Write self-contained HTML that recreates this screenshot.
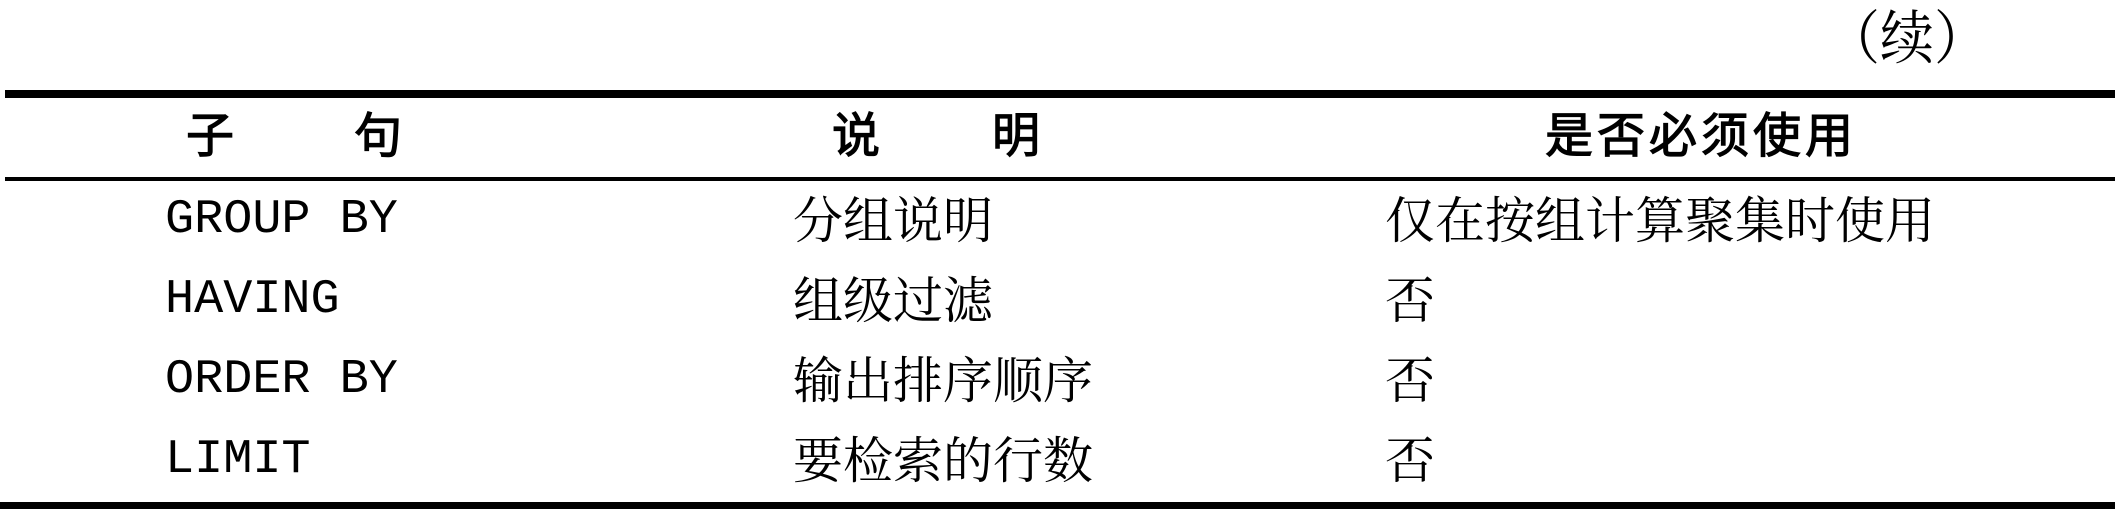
<!DOCTYPE html>
<html><head><meta charset="utf-8"><style>
html,body{margin:0;padding:0;background:#fff;}
body{width:2125px;height:519px;position:relative;overflow:hidden;color:#000;}
.r{position:absolute;background:#000;}
.t{position:absolute;white-space:nowrap;line-height:1;}
.cn{font-family:"Liberation Sans","Noto Serif CJK SC","Noto Sans CJK SC",serif;font-size:50px;}
.hd{font-family:"Liberation Sans","Noto Sans CJK SC",sans-serif;font-size:48px;font-weight:normal;-webkit-text-stroke:1.2px #000;}
.mono{font-family:"Liberation Mono",monospace;font-size:48.5px;}
</style></head><body>
<div class="t cn" style="left:1826px;top:10px;font-size:54px;transform:scaleY(1.08);transform-origin:top left;">（续）</div>
<div class="r" style="left:5px;top:90px;width:2110px;height:8px;"></div>
<div class="t hd" style="left:186px;top:113px;">子</div>
<div class="t hd" style="left:354px;top:113px;">句</div>
<div class="t hd" style="left:832px;top:113px;">说</div>
<div class="t hd" style="left:992px;top:113px;">明</div>
<div class="t hd" style="left:1545px;top:113px;letter-spacing:4px;">是否必须使用</div>
<div class="r" style="left:5px;top:177px;width:2110px;height:4px;"></div>

<div class="t mono" style="left:165px;top:196px;">GROUP BY</div>
<div class="t cn" style="left:793px;top:196px;">分组说明</div>
<div class="t cn" style="left:1385px;top:196px;">仅在按组计算聚集时使用</div>

<div class="t mono" style="left:165px;top:276px;">HAVING</div>
<div class="t cn" style="left:793px;top:276px;">组级过滤</div>
<div class="t cn" style="left:1385px;top:276px;">否</div>

<div class="t mono" style="left:165px;top:356px;">ORDER BY</div>
<div class="t cn" style="left:793px;top:356px;">输出排序顺序</div>
<div class="t cn" style="left:1385px;top:356px;">否</div>

<div class="t mono" style="left:165px;top:436px;">LIMIT</div>
<div class="t cn" style="left:793px;top:436px;">要检索的行数</div>
<div class="t cn" style="left:1385px;top:436px;">否</div>

<div class="r" style="left:0px;top:502px;width:2115px;height:7px;"></div>
</body></html>
